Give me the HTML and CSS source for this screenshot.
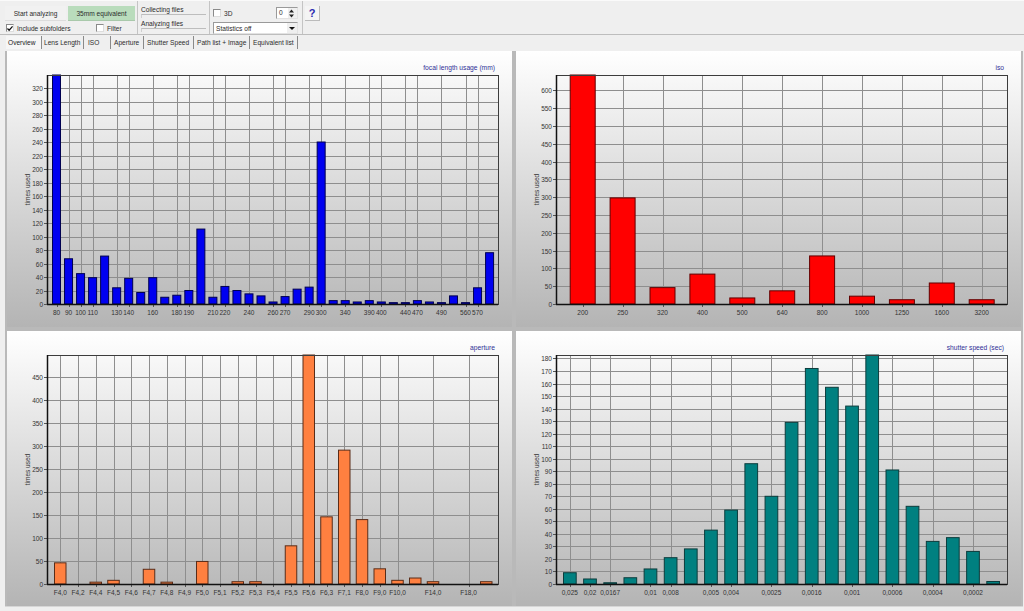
FILE: index.html
```html
<!DOCTYPE html>
<html lang="en">
<head>
    <meta charset="UTF-8">
    <meta name="viewport" content="width=device-width, initial-scale=1.0">
    <title>Exif statistics</title>
    <link rel="stylesheet" href="styles.css">
</head>
<body>
    <div class="toolbar">
        <div class="group group-run">
            <div class="row">
                <span class="btn">Start analyzing</span>
                <span class="btn btn-on">35mm equivalent</span>
            </div>
            <div class="row row-checks">
                <span class="check-item check-subfolders">
                    <span class="check">
                        <svg width="7" height="7" viewBox="0 0 7 7"><path d="M0.5 3.5 L2.5 5.5 L6.5 1" fill="none" stroke="#111" stroke-width="1.5"/></svg>
                    </span>
                    Include subfolders
                </span>
                <span class="check-item"><span class="check"></span>Filter</span>
            </div>
        </div>
        <div class="group group-status">
            <div class="status-label">Collecting files</div>
            <div class="progress"></div>
            <div class="status-label">Analyzing files</div>
            <div class="progress"></div>
        </div>
        <div class="group group-options">
            <div class="row row-3d">
                <span class="check-item"><span class="check"></span>3D</span>
                <span class="spinner">
                    <span class="spinner-value">0</span>
                    <span class="spinner-arrows">
                        <svg width="7" height="9" viewBox="0 0 7 9"><path d="M3.5 0.5 L6 3.5 H1 Z M1 5.5 H6 L3.5 8.5 Z" fill="#222"/></svg>
                    </span>
                </span>
            </div>
            <div class="dropdown">
                <span class="dropdown-value">Statistics off</span>
                <span class="dropdown-arrow">
                    <svg width="6" height="3" viewBox="0 0 6 3"><path d="M0 0 H6 L3 3 Z" fill="#111"/></svg>
                </span>
            </div>
        </div>
        <div class="group group-help">
            <span class="help">?</span>
        </div>
    </div>

    <div class="tabs">
        <span class="tab tab-active tab-overview">Overview</span>
        <span class="tab tab-lens">Lens Length</span>
        <span class="tab tab-iso">ISO</span>
        <span class="tab tab-aperture">Aperture</span>
        <span class="tab tab-shutter">Shutter Speed</span>
        <span class="tab tab-path">Path list + Image</span>
        <span class="tab tab-equiv">Equivalent list</span>
    </div>

    <div class="charts">
        <div class="panel panel-top" id="chartFocal"></div>
        <div class="panel panel-top" id="chartIso"></div>
        <div class="panel" id="chartAperture"></div>
        <div class="panel" id="chartShutter"></div>
    </div>

    <script src="charts.js"></script>
</body>
</html>
```

FILE: styles.css
```css
body {
    font-family: "Liberation Sans", Arial, sans-serif;
    font-size: 6.6px;
    color: #2c2c2c;
    margin: 0;
    padding: 0;
    width: 1024px;
    height: 611px;
    overflow: hidden;
    background: #efefef;
}

.toolbar {
    display: flex;
    height: 35px;
    box-sizing: border-box;
    padding-left: 5px;
    border-top: 1px solid #fafafa;
    border-bottom: 1px solid #bdbdbd;
}
.group {
    box-sizing: border-box;
    padding-top: 5px;
    border-right: 1px solid #c4c4c4;
}
.group-run {
    width: 133px;
}
.group-status {
    width: 72px;
    padding-left: 3px;
    padding-top: 3px;
}
.group-options {
    width: 93px;
    padding-left: 3px;
}
.group-help {
    border-right: none;
    padding-left: 2px;
    padding-top: 5px;
}
.row {
    display: flex;
    align-items: center;
}
.btn {
    display: flex;
    align-items: center;
    justify-content: center;
    width: 61px;
    height: 15px;
    margin-right: 2px;
    background: #f1f1f1;
    border-bottom: 1px solid #dcdcdc;
    box-sizing: border-box;
}
.btn-on {
    width: 67px;
    background: #b9dcbc;
    border-bottom-color: #a9c9ab;
}
.row-checks {
    margin-top: 3px;
    padding-left: 1px;
}
.check-item {
    display: flex;
    align-items: center;
}
.check-subfolders {
    width: 90px;
}
.check {
    display: flex;
    align-items: center;
    justify-content: center;
    width: 8px;
    height: 8px;
    margin-right: 3px;
    background: #fff;
    border: 1px solid #8a8a8a;
    border-right-color: #ddd;
    border-bottom-color: #ddd;
    box-sizing: border-box;
}
.status-label {
    height: 10px;
    line-height: 12px;
}
.progress {
    width: 65px;
    height: 4px;
    border-top: 1px solid #bdbdbd;
    border-left: 1px solid #cfcfcf;
    box-sizing: border-box;
}
.row-3d {
    justify-content: space-between;
    height: 14px;
    padding-right: 4px;
}
.spinner {
    display: flex;
    width: 22px;
    height: 12px;
    background: #fff;
    border: 1px solid #9a9a9a;
    border-right-color: #e2e2e2;
    border-bottom-color: #e2e2e2;
    box-sizing: border-box;
}
.spinner-value {
    flex: 1;
    padding-left: 2px;
    line-height: 10px;
}
.spinner-arrows {
    display: flex;
    align-items: center;
    width: 9px;
    background: #efefef;
}
.dropdown {
    display: flex;
    align-items: center;
    width: 85px;
    height: 12px;
    margin-top: 2px;
    background: #fff;
    border: 1px solid #9a9a9a;
    border-right-color: #e2e2e2;
    border-bottom-color: #e2e2e2;
    box-sizing: border-box;
}
.dropdown-value {
    flex: 1;
    padding-left: 2px;
}
.dropdown-arrow {
    display: flex;
    align-items: center;
    justify-content: center;
    width: 10px;
    height: 10px;
    background: #efefef;
}
.help {
    display: block;
    width: 15px;
    height: 15px;
    line-height: 15px;
    text-align: center;
    font-size: 11px;
    font-weight: bold;
    color: #2a2ab0;
    background: #f4f4f4;
    border-right: 1px solid #bbb;
    border-bottom: 1px solid #bbb;
    box-sizing: border-box;
}

.tabs {
    display: flex;
    height: 15px;
    padding-left: 6px;
    padding-top: 1px;
    box-sizing: border-box;
}
.tab {
    height: 13px;
    line-height: 13px;
    box-sizing: border-box;
    padding-left: 3px;
    border-right: 1px solid #8a8a8a;
    white-space: nowrap;
}
.tab-active {
    color: #222;
    background: #f6f6f6;
}
.tab-overview { width: 36px; padding-left: 2px; }
.tab-lens { width: 42px; padding-left: 2px; }
.tab-iso { width: 27px; padding-left: 4px; }
.tab-aperture { width: 33px; }
.tab-shutter { width: 50px; }
.tab-path { width: 56px; }
.tab-equiv { width: 48px; }

.charts {
    display: grid;
    grid-template-columns: 505px 505px;
    grid-template-rows: 276px 275px;
    gap: 4px;
    width: 1018px;
    height: 556px;
    margin-top: 1px;
    margin-left: 5px;
    padding: 0 2px;
    background: #b9b9b9;
    border-bottom: 1px solid #d6d6d6;
    box-sizing: border-box;
}
.panel {
    background: linear-gradient(to bottom, #ffffff, #b4b4b4);
    overflow: hidden;
}
.panel svg {
    display: block;
}

.grid-line {
    stroke: #8e8e8e;
    stroke-width: 1;
}
.frame {
    fill: none;
    stroke: #3c3c3c;
    stroke-width: 1;
}
.axis {
    stroke: #111;
    stroke-width: 1.5;
}
.tick {
    stroke: #555;
    stroke-width: 1;
}
.label {
    font-size: 6.5px;
    fill: #333;
}
.chart-title {
    font-size: 6.7px;
    fill: #2f2f96;
}
```

FILE: charts.js
```js
// px = pixels per unit of the y axis, x0/step/barW = bar geometry inside the panel
const plot = { left: 40, top: 24, width: 451, height: 229 };

const FULL = 100000; // bars that run off the top of the plot

const charts = [
    {
        id: 'chartFocal', title: 'focal length usage (mm)', height: 276,
        color: '#0000f0', edge: '#000050',
        px: 0.675, yStep: 20, yMax: 320, x0: 45, step: 12.03, barW: 9,
        values: [FULL, 67, 45, 39, 71, 24, 38, 17, 39, 10, 13, 20, 111, 10, 26, 20, 15, 12, 3, 11, 22, 25, 240,
                 5, 5, 3, 5, 3, 2, 2, 5, 3, 2, 12, 2, 24, 76],
        labels: ['80', '90', '100', '110', '', '130', '140', '', '160', '', '180', '190', '', '210', '220', '', '240', '',
                 '260', '270', '', '290', '300', '', '340', '', '390', '400', '', '440', '470', '', '490', '', '560', '570', '']
    },
    {
        id: 'chartIso', title: 'iso', height: 276,
        color: '#ff0000', edge: '#600000',
        px: 0.356, yStep: 50, yMax: 600, x0: 53.7, step: 39.9, barW: 26,
        values: [FULL, 298, 46, 84, 17, 37, 135, 22, 12, 59, 12],
        labels: ['200', '250', '320', '400', '500', '640', '800', '1000', '1250', '1600', '3200']
    },
    {
        id: 'chartAperture', title: 'aperture', height: 275,
        color: '#ff8040', edge: '#5a2c18',
        px: 0.46, yStep: 50, yMax: 450, x0: 47, step: 17.75, barW: 12.5,
        values: [46, 0, 4, 8, 0, 32, 4, 0, 49, 0, 5, 5, 0, 83, FULL, 146, 291, 140, 33, 8, 13, 5, 0, 0, 5],
        labels: ['F4,0', 'F4,2', 'F4,4', 'F4,5', 'F4,6', 'F4,7', 'F4,8', 'F4,9', 'F5,0', 'F5,1', 'F5,2', 'F5,3', 'F5,4',
                 'F5,5', 'F5,6', 'F6,3', 'F7,1', 'F8,0', 'F9,0', 'F10,0', '', 'F14,0', '', 'F18,0', '']
    },
    {
        id: 'chartShutter', title: 'shutter speed (sec)', height: 275,
        color: '#008080', edge: '#0c3c3c',
        px: 1.253, yStep: 10, yMax: 180, x0: 47, step: 20.157, barW: 13.7,
        values: [9, 4, 1, 5, 12, 21, 28, 43, 59, 96, 70, 129, 172, 157, 142, FULL, 91, 62, 34, 37, 26, 2],
        labels: ['0,025', '0,02', '0,0167', '', '0,01', '0,008', '', '0,005', '0,004', '', '0,0025', '', '0,0016', '',
                 '0,001', '', '0,0006', '', '0,0004', '', '0,0002', '']
    }
];

function line(cls, x1, y1, x2, y2) {
    return `<line class="${cls}" x1="${x1}" y1="${y1}" x2="${x2}" y2="${y2}"/>`;
}

function drawChart(chart) {
    const bottom = plot.top + plot.height;
    const right = plot.left + plot.width;
    let grid = '';
    let text = '';
    let bars = '';

    for (let v = 0; v <= chart.yMax; v += chart.yStep) {
        const y = Math.round(bottom - v * chart.px) + 0.5;
        if (v > 0) grid += line('grid-line', plot.left, y, right, y);
        grid += line('tick', plot.left - 3, y, plot.left, y);
        text += `<text class="label" x="${plot.left - 4}" y="${y + 2.5}" text-anchor="end">${v}</text>`;
    }

    chart.values.forEach((value, i) => {
        const x = chart.x0 + i * chart.step;
        const center = x + chart.barW / 2;
        const label = chart.labels[i];
        if (label) {
            const gx = Math.round(center) + 0.5;
            grid += line('grid-line', gx, plot.top, gx, bottom);
            grid += line('tick', gx, bottom, gx, bottom + 3);
            text += `<text class="label" x="${center}" y="${bottom + 10.5}" text-anchor="middle">${label}</text>`;
        }
        const h = Math.min(value * chart.px, plot.height);
        if (h > 0) {
            bars += `<rect x="${x + 0.5}" y="${bottom - h}" width="${chart.barW - 1}" height="${h}" fill="${chart.color}" stroke="${chart.edge}"/>`;
        }
    });

    const midY = plot.top + plot.height / 2;
    document.getElementById(chart.id).innerHTML = `
        <svg width="505" height="${chart.height}" viewBox="0 0 505 ${chart.height}">
            ${grid}
            ${bars}
            <rect class="frame" x="${plot.left + 0.5}" y="${plot.top + 0.5}" width="${plot.width}" height="${plot.height}"/>
            ${line('axis', plot.left + 0.5, plot.top, plot.left + 0.5, bottom)}
            ${line('axis', plot.left, bottom + 0.5, right, bottom + 0.5)}
            ${text}
            <text class="chart-title" x="488" y="18.5" text-anchor="end">${chart.title}</text>
            <text class="label" text-anchor="middle" transform="translate(22.5 ${midY}) rotate(-90)">times used</text>
        </svg>`;
}

charts.forEach(drawChart);
```
